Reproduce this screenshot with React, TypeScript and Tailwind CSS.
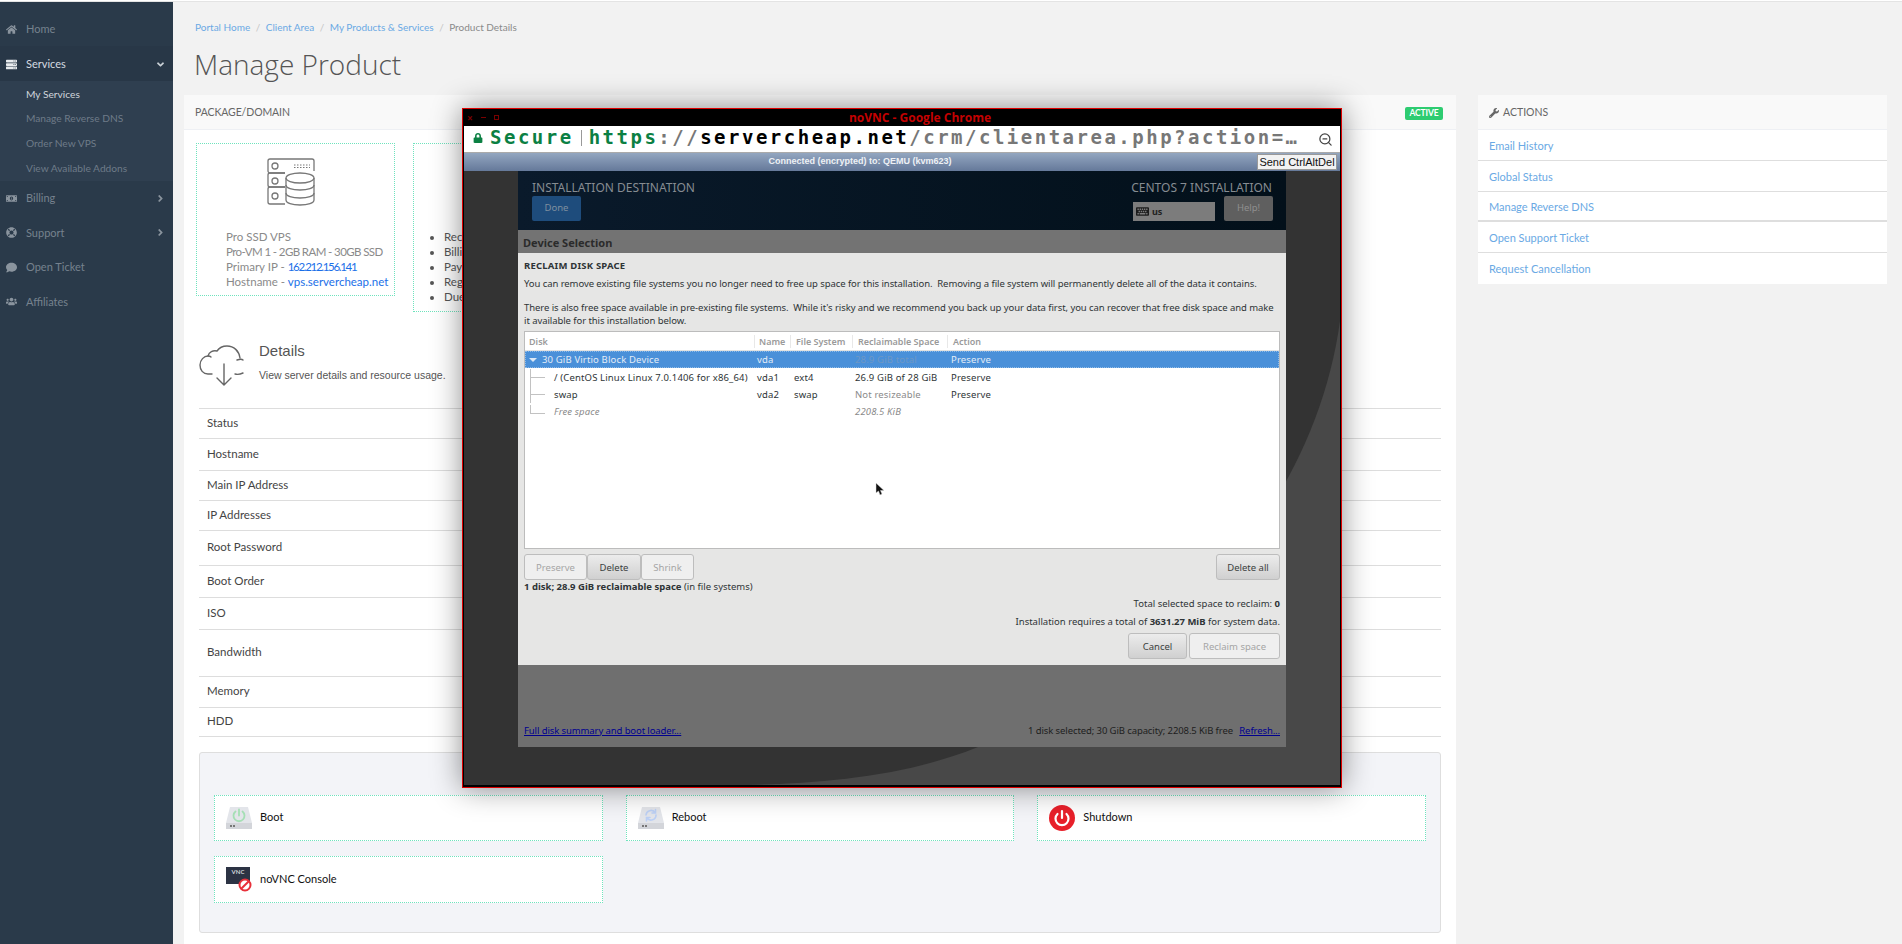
import React from 'react';
import { FaAngleDown, FaAngleRight, FaComment, FaHome, FaKeyboard, FaLifeRing, FaLock, FaMoneyBillAlt, FaServer, FaUsers, FaWrench } from 'react-icons/fa';
import { ZoomOut } from 'lucide-react';

const navItems = [
  { label: 'Home', icon: FaHome, top: 'h-[35px] mt-[11px] pt-[1px]' },
  { label: 'Services', icon: FaServer, active: true, open: true, top: 'h-[35px] pt-[1px]' },
];

const subItems = ['My Services', 'Manage Reverse DNS', 'Order New VPS', 'View Available Addons'];

const lowerNav = [
  { label: 'Billing', icon: FaMoneyBillAlt, arrow: true },
  { label: 'Support', icon: FaLifeRing, arrow: true },
  { label: 'Open Ticket', icon: FaComment },
  { label: 'Affiliates', icon: FaUsers },
];

const detailRows = [
  { label: 'Status', h: 'h-[30px]' },
  { label: 'Hostname', h: 'h-[32px]' },
  { label: 'Main IP Address', h: 'h-[30px]' },
  { label: 'IP Addresses', h: 'h-[30px]' },
  { label: 'Root Password', h: 'h-[35px]' },
  { label: 'Boot Order', h: 'h-[32px]' },
  { label: 'ISO', h: 'h-[32px]' },
  { label: 'Bandwidth', h: 'h-[47px]' },
  { label: 'Memory', h: 'h-[31px]' },
  { label: 'HDD', h: 'h-[29px]' },
];

const actionLinks = [
  { label: 'Email History', cls: 'h-[31px] border-b' },
  { label: 'Global Status', cls: 'h-[31px] border-b' },
  { label: 'Manage Reverse DNS', cls: 'h-[30px] border-b-2' },
  { label: 'Open Support Ticket', cls: 'h-[31px] border-b' },
  { label: 'Request Cancellation', cls: 'h-[31px]' },
];

const ServerIcon = () => (
  <svg width="48" height="48" viewBox="0 0 48 48" fill="none" stroke="#777" strokeWidth="1.3">
    <path d="M18 15H3a2 2 0 0 1-2-2V3a2 2 0 0 1 2-2h42a2 2 0 0 1 2 2v10" />
    <path d="M18 15H3a2 2 0 0 0-2 2v10a2 2 0 0 0 2 2h15" />
    <path d="M18 29H3a2 2 0 0 0-2 2v13a2 2 0 0 0 2 2h15" />
    <circle cx="8" cy="8" r="3" />
    <circle cx="8" cy="23" r="3" />
    <circle cx="8" cy="38" r="3" />
    <path d="M27 7h16M27 9.500h16" strokeDasharray="1.500 1.500" strokeWidth="1" />
    <ellipse cx="33" cy="20" rx="14" ry="5" fill="#fff" />
    <path d="M19 20v22c0 3 6 5 14 5s14-2 14-5V20" />
    <path d="M19 27c0 3 6 5 14 5s14-2 14-5M19 35c0 3 6 5 14 5s14-2 14-5" />
  </svg>
);

const CloudIcon = () => (
  <svg className="mt-[3px]" width="46" height="42" viewBox="0 0 46 42" fill="none" stroke="#666" strokeWidth="1.4" strokeLinecap="round">
    <path d="M13 29H9C4 29 1 25 1 20c0-5 4-9 8-9 1 0 2 0 3 1" />
    <path d="M9 11c1-4 5-6 9-5 2-3 6-5 10-5 7 0 12 5 13 12" />
    <path d="M38 15c3-1 5-1 6 0M36 29c3 1 6 0 8-1" />
    <path d="M25 19v21M18 33l7 7 7-7" />
  </svg>
);

const DriveIcon = ({ children }: { children: React.ReactNode }) => (
  <svg className="shrink-0" width="26" height="22" viewBox="0 0 26 22" fill="none">
    <path d="M4 0h18l4 16v6H0v-6z" fill="#e3e5ea" />
    <rect x="0" y="16" width="26" height="6" fill="#d3d5da" />
    <rect x="4" y="18" width="2" height="2" fill="#777" />
    <rect x="7" y="18" width="2" height="2" fill="#777" />
    {children}
  </svg>
);

const VncIcon = () => (
  <div className="relative h-[25px] w-[26px] shrink-0">
    <div className="flex h-[17px] w-[24px] items-start justify-center bg-[#2c3344] pt-[1px] text-[6px] font-bold leading-[8px] text-[#cfd3da]">VNC</div>
    <svg className="absolute bottom-0 right-0" width="14" height="14" viewBox="0 0 14 14" fill="none" stroke="#e8303a" strokeWidth="2">
      <circle cx="7" cy="7" r="5.500" fill="#fff" />
      <path d="M3.200 10.800l7.600-7.600" />
    </svg>
  </div>
);

const OsButton = ({ label, disabled, className }: { label: string; disabled?: boolean; className: string }) => (
  <div
    className={`flex h-[26px] items-center justify-center rounded-[3px] border border-[#bdbdbd] text-[9.500px] ${
      disabled ? 'bg-[#efefef] text-[#a5a5a5]' : 'bg-gradient-to-b from-[#ececec] to-[#d0d0d0] text-[#3b3f40]'
    } ${className}`}
  >
    {label}
  </div>
);

const Installer = () => (
  <div className="relative h-[659px] w-full overflow-hidden bg-[#484848] font-['Noto_Sans',sans-serif]">
    <svg className="absolute inset-0" width="876" height="614" viewBox="0 0 876 614">
      <path d="M0 0H876V150C850 340 700 500 514 576C440 606 360 612 284 614H0Z" fill="#333333" />
    </svg>
    <div className="relative mx-[54px] flex h-[576px] w-[768px] flex-col">
      <div className="relative h-[59px] shrink-0 bg-gradient-to-r from-[#0a1a2b] to-[#03101a] pl-[14px] pr-[13px]">
        <div className="flex h-[24px] items-end justify-between pb-0 pr-[1px] text-[12px] leading-[15px] text-[#868c92]">
          <span>INSTALLATION DESTINATION</span>
          <span>CENTOS 7 INSTALLATION</span>
        </div>
        <div className="mt-[1px] flex justify-between">
          <div className="flex h-[25px] w-[49px] items-center justify-center rounded-[2px] bg-[#1e4c7c] text-[9.500px] text-[#7f8f9f]">Done</div>
          <div className="flex gap-[9px]">
            <div className="mt-[6px] flex h-[19px] w-[82px] items-center gap-[3px] bg-[#7c7c7c] px-[3px] text-[9px] font-bold text-[#222]">
              <FaKeyboard className="text-[13px] text-[#1c1c1c]" />
              us
            </div>
            <div className="flex h-[25px] w-[49px] items-center justify-center rounded-[2px] bg-[#5f5f5f] text-[9.500px] text-[#8f8f8f]">Help!</div>
          </div>
        </div>
      </div>
      <div className="flex h-[23px] shrink-0 items-center bg-[#737373] px-[5px] pt-[3px] text-[11px] font-bold text-[#2b2b2b]">Device Selection</div>
      <div className="flex h-[412px] shrink-0 flex-col bg-[#e6e6e5] px-[6px] text-[9.500px] leading-[13px] text-[#2e3436]">
        <div className="mt-[6px] h-[14px] text-[9.500px] font-bold tracking-[0.2px] text-[#2e3436]">RECLAIM DISK SPACE</div>
        <div className="mt-[4px] whitespace-nowrap tracking-[-0.07px]">You can remove existing file systems you no longer need to free up space for this installation.&nbsp; Removing a file system will permanently delete all of the data it contains.</div>
        <div className="mt-[11px] whitespace-nowrap tracking-[-0.07px]">
          There is also free space available in pre-existing file systems.&nbsp; While it&apos;s risky and we recommend you back up your data first, you can recover that free disk space and make
          <br />
          it available for this installation below.
        </div>
        <div className="mt-[4px] h-[218px] w-[756px] shrink-0 border border-[#bcbcbc] bg-white">
          <div className="grid h-[19px] grid-cols-[229px_36px_62px_95px_1fr] items-center whitespace-nowrap border-b border-[#e2e2e2] text-[9px] font-semibold text-[#9a9a9a]">
            <span className="pl-[4px]">Disk</span>
            <span className="border-l border-[#e8e8e8] pl-[4px]">Name</span>
            <span className="border-l border-[#e8e8e8] pl-[5px]">File System</span>
            <span className="border-l border-[#e8e8e8] pl-[5px]">Reclaimable Space</span>
            <span className="border-l border-[#e8e8e8] pl-[5px]">Action</span>
          </div>
          <div className="mb-[1px] grid h-[17px] grid-cols-[229px_36px_62px_95px_1fr] items-center whitespace-nowrap border border-dotted border-[#8fbbe8] bg-[#4a90d9] tracking-[0.15px] text-[#e4edf7]">
            <span className="flex items-center gap-[5px] pl-[3px]">
              <span className="h-0 w-0 border-x-[4px] border-t-[4px] border-x-transparent border-t-[#dbe8f6]" />
              30 GiB Virtio Block Device
            </span>
            <span className="pl-[2px]">vda</span>
            <span />
            <span className="pl-[2px] text-[#6e97c4]">28.9 GiB total</span>
            <span className="pl-[3px]">Preserve</span>
          </div>
          {[
            ['/ (CentOS Linux Linux 7.0.1406 for x86_64)', 'vda1', 'ext4', '26.9 GiB of 28 GiB', 'Preserve'],
            ['swap', 'vda2', 'swap', 'Not resizeable', 'Preserve'],
            ['Free space', '', '', '2208.5 KiB', ''],
          ].map((row, i) => (
            <div key={row[0]} className={`grid h-[17px] grid-cols-[229px_36px_62px_95px_1fr] items-center whitespace-nowrap tracking-[0.15px] ${i === 2 ? 'italic text-[#8a8a8a]' : 'text-[#2e3436]'}`}>
              <span className="flex items-center pl-[5px]">
                <span className={`mr-[9px] flex w-[15px] shrink-0 flex-col self-start border-l border-[#c2c2c2] pt-[8px] ${i === 2 ? 'h-[9px]' : 'h-[17px]'}`}>
                  <span className="h-px w-full bg-[#c2c2c2]" />
                </span>
                <span>{row[0]}</span>
              </span>
              <span className="pl-[3px]">{row[1]}</span>
              <span className="pl-[4px]">{row[2]}</span>
              <span className={`pl-[3px] ${i === 1 ? 'text-[#8a8a8a]' : ''}`}>{row[3]}</span>
              <span className="pl-[4px]">{row[4]}</span>
            </div>
          ))}
          {/* mouse pointer caught in the capture */}
          <svg className="absolute left-[357px] top-[311px]" width="11" height="14" viewBox="0 0 11 14">
            <path d="M1 1v10l2.500-2 1.500 4 2-1-1.500-3.500H9z" fill="#111" stroke="#ddd" strokeWidth="0.500" />
          </svg>
        </div>
        <div className="mt-[5px] flex w-[756px] justify-between">
          <div className="flex">
            <OsButton label="Preserve" disabled className="w-[63px]" />
            <OsButton label="Delete" className="w-[54px]" />
            <OsButton label="Shrink" disabled className="w-[53px]" />
          </div>
          <OsButton label="Delete all" className="w-[64px]" />
        </div>
        <div className="h-[14px] leading-[14px]">
          <b>1 disk; 28.9 GiB reclaimable space</b> (in file systems)
        </div>
        <div className="mt-[3px] w-[756px] text-right leading-[14px]">
          Total selected space to reclaim: <b>0</b>
        </div>
        <div className="mt-[4px] w-[756px] text-right leading-[14px]">
          Installation requires a total of <b>3631.27 MiB</b> for system data.
        </div>
        <div className="mt-[4px] flex w-[756px] justify-end gap-[2px]">
          <OsButton label="Cancel" className="w-[59px]" />
          <OsButton label="Reclaim space" disabled className="w-[91px]" />
        </div>
      </div>
      <div className="flex h-[82px] shrink-0 items-end justify-between bg-[#6f6f6f] px-[6px] pb-[10px] text-[9.500px] leading-[13px] tracking-[-0.1px] text-[#1e1e1e]">
        <span className="text-[#00008f] underline">Full disk summary and boot loader...</span>
        <span>
          1 disk selected; 30 GiB capacity; 2208.5 KiB free <span className="ml-[4px] text-[#00008f] underline">Refresh...</span>
        </span>
      </div>
    </div>
  </div>
);

const NoVncWindow = () => (
  <div className="absolute left-[462px] top-[108px] flex h-[680px] w-[880px] flex-col border border-[#dd0000] bg-black px-[1px] pb-[2px] shadow-[0_0_28px_rgba(0,0,0,0.45)]">
    <div className="relative flex h-[17px] shrink-0 items-center justify-center bg-black font-['Open_Sans',sans-serif] text-[12px] font-bold text-[#c40000]">
      <div className="absolute left-[3px] flex items-center gap-[8px] text-[#7a0000]">
        <span className="text-[10px] leading-none">×</span>
        <span className="h-px w-[5px] bg-[#7a0000]" />
        <span className="h-[5px] w-[5px] border border-[#7a0000]" />
      </div>
      <span className="ml-[36px]">noVNC - Google Chrome</span>
    </div>
    <div className="flex h-[26px] shrink-0 items-center bg-white pb-[3px] pl-[9px] font-['DejaVu_Sans_Mono',monospace] text-[19px] font-bold tracking-[2.500px]">
      <FaLock className="mr-[7px] shrink-0 text-[10px] text-[#0b8043]" />
      <span className="text-[#0b8043]">Secure</span>
      <span className="ml-[7px] mr-[7px] h-[16px] w-px shrink-0 bg-[#999]" />
      <span className="whitespace-nowrap">
        <span className="text-[#0b8043]">https</span>
        <span className="text-[#777]">://</span>
        <span className="text-black">servercheap.net</span>
        <span className="text-[#777]">/crm/clientarea.php?action=…</span>
      </span>
      <ZoomOut className="ml-auto mr-[7px] mt-[3px] h-[15px] w-[15px] shrink-0 text-[#444]" />
    </div>
    <div className="relative flex h-[19px] shrink-0 items-center justify-center border-t border-[#aaa] bg-gradient-to-b from-[#93a6c0] to-[#65799a] font-['Liberation_Sans',sans-serif] text-[9px] font-bold text-[#eef1f5]">
      <span className="mr-[84px]">Connected (encrypted) to: QEMU (kvm623)</span>
      <div className="absolute right-[3px] top-[1px] flex h-[16px] w-[80px] items-center justify-center border border-[#999] bg-[#f2f2f2] text-[11px] font-normal text-[#111]">Send CtrlAltDel</div>
    </div>
    <Installer />
  </div>
);

const Sidebar = () => (
  <aside className="flex w-[173px] shrink-0 flex-col bg-[#2a3a4a] text-[11px]">
    {navItems.map(({ label, icon: Icon, active, open, top }) => (
      <div key={label} className={`flex items-center ${top} ${active ? 'bg-[#283747] text-[#d5dbe1]' : 'text-[#76828e]'}`}>
        <span className="flex w-[26px] justify-center pl-[1px] pr-[5px]">
          <Icon className={`text-[11px] ${active ? 'text-[#e8ebee]' : 'text-[#8a949e]'}`} />
        </span>
        {label}
        {open && <FaAngleDown className="ml-auto mr-[7px] text-[11px] text-[#c9d0d6]" />}
      </div>
    ))}
    <div className="flex h-[100px] flex-col bg-[#2f3f50] pt-[1px] text-[10.200px]">
      {subItems.map((item, i) => (
        <div key={item} className={`flex h-[25px] items-center pl-[26px] ${i === 0 ? 'text-[#d0d6dc]' : 'text-[#6e7b88]'}`}>
          {item}
        </div>
      ))}
    </div>
    <div>
      {lowerNav.map(({ label, icon: Icon, arrow }) => (
        <div key={label} className="flex h-[34.500px] items-center text-[#76828e]">
          <span className="flex w-[26px] justify-center pl-[1px] pr-[5px]">
            <Icon className="text-[11px] text-[#8a949e]" />
          </span>
          {label}
          {arrow && <FaAngleRight className="ml-auto mr-[7px] text-[11px] text-[#8a949e]" />}
        </div>
      ))}
    </div>
  </aside>
);

const ProductBox = () => (
  <div className="flex h-[153px] w-[199px] flex-col border border-dotted border-[#6fe3bd] pl-[29px]">
    <div className="mt-[14px] ml-[41px]">
      <ServerIcon />
    </div>
    <div className="mt-[23px] whitespace-nowrap text-[11.500px] leading-[15px] text-[#8a8a8a]">
      <div>Pro SSD VPS</div>
      <div className="tracking-[-0.6px]">Pro-VM 1 - 2GB RAM - 30GB SSD</div>
      <div>
        Primary IP - <span className="tracking-[-1.300px] text-[#1a6fe8]">162.212.156.141</span>
      </div>
      <div>
        Hostname - <span className="text-[#1a6fe8]">vps.servercheap.net</span>
      </div>
    </div>
  </div>
);

const BillingBox = () => (
  <div className="flex h-[169px] w-[198px] flex-col border border-dotted border-[#6fe3bd] pl-[30px] pt-[85px]">
    <ul className="list-disc whitespace-nowrap text-[11.500px] leading-[15px] text-[#555]">
      <li>Recurring Amount</li>
      <li>Billing Cycle</li>
      <li>Payment Method</li>
      <li>Registration Date</li>
      <li>Due Date</li>
    </ul>
  </div>
);

const PowerTile = ({ label, icon }: { label: string; icon: React.ReactNode }) => (
  <div className="flex items-center gap-[8px] border border-dotted border-[#6fe3bd] bg-white pb-[1px] pl-[11px] text-[11px] text-[#111]">
    {icon}
    {label}
  </div>
);

export default function App() {
  return (
    <div className="relative flex h-[944px] w-[1902px] overflow-hidden bg-[#f2f2f2] font-['Lato',sans-serif]">
      <div className="absolute inset-x-0 top-0 z-10 h-[2px] border-b border-[#e4e4e4] bg-white" />
      <Sidebar />
      <main className="flex min-w-0 flex-1 flex-col">
        <nav className="mt-[20px] flex h-[14px] items-center pl-[22px] text-[10px] text-[#6aa9e4]">
          <span>Portal Home</span>
          <span className="mx-[5.500px] text-[#c5c5c5]">/</span>
          <span>Client Area</span>
          <span className="mx-[5.500px] text-[#c5c5c5]">/</span>
          <span>My Products &amp; Services</span>
          <span className="mx-[5.500px] text-[#c5c5c5]">/</span>
          <span className="text-[#8a8a8a]">Product Details</span>
        </nav>
        <h1 className="mt-[10px] h-[51px] pl-[21px] font-['Open_Sans',sans-serif] text-[28px] font-light leading-[40px] text-[#555]">Manage Product</h1>
        <div className="flex gap-[22px] pl-[11px]">
          <section className="h-[849px] w-[1272px] shrink-0 bg-white">
            <header className="flex h-[35px] items-center justify-between border-b border-[#eef0f4] bg-[#f9f9f9] pl-[11px] pr-[13px] pt-[2px] text-[10.500px] tracking-[-0.1px] text-[#666]">
              PACKAGE/DOMAIN
              <span className="flex h-[13px] w-[38px] items-center justify-center rounded-[2px] bg-[#2ecc71] text-[8.500px] font-bold text-white">ACTIVE</span>
            </header>
            <div className="flex gap-[18px] pl-[12px] pt-[13px]">
              <ProductBox />
              <BillingBox />
            </div>
            <div className="mt-[30px] flex pl-[15px]">
              <CloudIcon />
              <div className="ml-[14px] font-['Liberation_Sans',sans-serif]">
                <div className="text-[15px] leading-[18px] text-[#555]">Details</div>
                <div className="mt-[8px] text-[10.500px] leading-[14px] text-[#555]">View server details and resource usage.</div>
              </div>
            </div>
            <div className="mx-[15px] mt-[21px] border-t border-[#dddddd]">
              {detailRows.map((row) => (
                <div key={row.label} className={`flex items-center border-b border-[#dddddd] pb-[2px] pl-[8px] text-[11.500px] text-[#444] ${row.h}`}>
                  {row.label}
                </div>
              ))}
            </div>
            <div className="mx-[15px] mt-[15px] grid h-[181px] grid-cols-3 grid-rows-[46px_47px] gap-x-[23px] gap-y-[15px] rounded-[3px] border border-[#dedede] bg-[#f3f4f8] px-[14px] pt-[42px]">
              <PowerTile
                label="Boot"
                icon={
                  <DriveIcon>
                    <path d="M9.500 4.500a5.500 5.500 0 1 0 7 0M13 2.500v6" stroke="#a5dfb5" strokeWidth="1.800" strokeLinecap="round" />
                  </DriveIcon>
                }
              />
              <PowerTile
                label="Reboot"
                icon={
                  <DriveIcon>
                    <path d="M8 8a5 5 0 0 1 9-2.500M18 8a5 5 0 0 1-9 3M17.500 2.500v3.500h-3.500M8.500 14v-3.500H12" stroke="#bcd0f5" strokeWidth="1.600" strokeLinecap="round" />
                  </DriveIcon>
                }
              />
              <PowerTile
                label="Shutdown"
                icon={
                  <svg className="shrink-0" width="26" height="26" viewBox="0 0 26 26" fill="none">
                    <circle cx="13" cy="13" r="13" fill="#e8202a" />
                    <path d="M8.500 9a6.500 6.500 0 1 0 9 0M13 6v7" stroke="#fff" strokeWidth="2.200" strokeLinecap="round" />
                  </svg>
                }
              />
              <PowerTile label="noVNC Console" icon={<VncIcon />} />
            </div>
          </section>
          <aside className="w-[409px] shrink-0 self-start bg-white">
            <header className="flex h-[35px] items-center gap-[4px] border-b border-[#eef0f4] bg-[#f9f9f9] pl-[11px] pt-[2px] text-[10.500px] text-[#666]">
              <FaWrench className="text-[10px]" /> ACTIONS
            </header>
            {actionLinks.map((link) => (
              <div key={link.label} className={`flex items-center border-[#dedede] pl-[11px] pt-[2px] text-[11px] text-[#6aa9e4] ${link.cls}`}>
                {link.label}
              </div>
            ))}
          </aside>
        </div>
      </main>
      <NoVncWindow />
    </div>
  );
}
